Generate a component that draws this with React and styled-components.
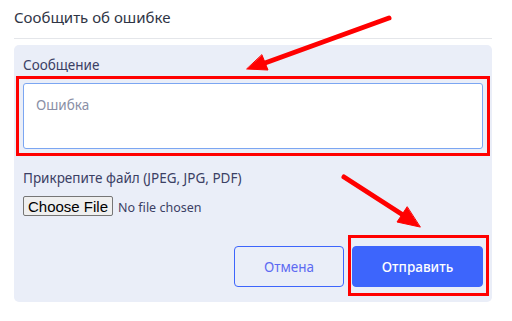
import React from "react";
import styled, { createGlobalStyle } from "styled-components";

const GlobalStyle = createGlobalStyle`
  body {
    margin: 0;
    background: #fff;
    font-family: "Noto Sans", "Open Sans", sans-serif;
  }
`;

function Arrows() {
  return (
    <Overlay width="512" height="321" viewBox="0 0 512 321">
      <g stroke="#ff0000" strokeWidth="5" strokeLinecap="round" fill="#ff0000">
        <line x1="389" y1="18" x2="265" y2="63" />
        <polygon points="247,69 268,70 262,55" strokeWidth="1" />
        <line x1="344" y1="177" x2="403" y2="215" />
        <polygon points="420,227 397,222 407,207" strokeWidth="1" />
      </g>
    </Overlay>
  );
}

function App() {
  return (
    <StPage>
      <GlobalStyle />
      <StTitle>Сообщить об ошибке</StTitle>
      <StPanel>
        <StLabel>Сообщение</StLabel>
        <StField>
          <StTextarea placeholder="Ошибка" />
          <StRing $t={-7} $r={-7} $b={-7} $l={-7} />
        </StField>
        <StLabel $gap={20}>Прикрепите файл (JPEG, JPG, PDF)</StLabel>
        <StFile type="file" />
        <StActions>
          <StButton type="button">Отмена</StButton>
          <StField>
            <StButton type="submit" $primary>
              Отправить
            </StButton>
            <StRing $t={-11} $r={-6} $b={-9} $l={-4} />
          </StField>
        </StActions>
      </StPanel>
      <Arrows />
    </StPage>
  );
}

const StPage = styled.div`
  position: relative;
  width: 478px;
  height: 321px;
  padding: 0 20px 0 14px;
`;

const StTitle = styled.h1`
  margin: 0;
  padding: 7px 0 10px;
  font-size: 15px;
  font-weight: 400;
  line-height: 21px;
  color: #2f3545;
  border-bottom: 1px solid #e4e6ea;
`;

const StPanel = styled.div`
  margin-top: 6px;
  background: #eaeef8;
  border-radius: 5px;
  padding: 11px 9px 15px;
  display: flex;
  flex-direction: column;
`;

const StLabel = styled.div`
  font-size: 13.5px;
  line-height: 18px;
  color: #3b4064;
  margin-top: ${(p) => p.$gap || 0}px;
  margin-bottom: 9px;
`;

const StField = styled.div`
  position: relative;
  display: flex;
`;

const StRing = styled.span`
  position: absolute;
  top: ${(p) => p.$t}px;
  right: ${(p) => p.$r}px;
  bottom: ${(p) => p.$b}px;
  left: ${(p) => p.$l}px;
  border: 3px solid #ff0000;
  pointer-events: none;
`;

const StTextarea = styled.textarea`
  width: 100%;
  height: 66px;
  box-sizing: border-box;
  border: 1px solid #7ba6f2;
  border-radius: 3px;
  padding: 12px 12px;
  resize: none;
  font-family: inherit;
  font-size: 13.5px;
  color: #2f3545;
  background: #fff;
  outline: none;

  &::placeholder {
    color: #8a8fa6;
  }
`;

const StFile = styled.input`
  font-family: inherit;
  font-size: 12.5px;
  color: #3b4064;
  align-self: flex-start;

  &::file-selector-button {
    font-family: "Liberation Sans", Arial, sans-serif;
    font-size: 15px;
    height: 20px;
    padding: 0 4px;
    margin-right: 5px;
    border: 1px solid #767676;
    border-radius: 2px;
    background: #efefef;
    color: #000;
  }
`;

const StActions = styled.div`
  display: flex;
  justify-content: flex-end;
  gap: 8px;
  margin-top: 30px;
`;

const StButton = styled.button`
  height: 41px;
  width: ${(p) => (p.$primary ? 131 : 110)}px;
  border-radius: 4px;
  border: 1px solid #3d65fc;
  background: ${(p) => (p.$primary ? "#3d65fc" : "transparent")};
  color: ${(p) => (p.$primary ? "#fff" : "#5d6af2")};
  font-family: inherit;
  font-size: 13.5px;
  font-weight: ${(p) => (p.$primary ? 500 : 400)};
  cursor: pointer;
`;

const Overlay = styled.svg`
  position: absolute;
  left: 0;
  top: 0;
  pointer-events: none;
`;

export default App;
